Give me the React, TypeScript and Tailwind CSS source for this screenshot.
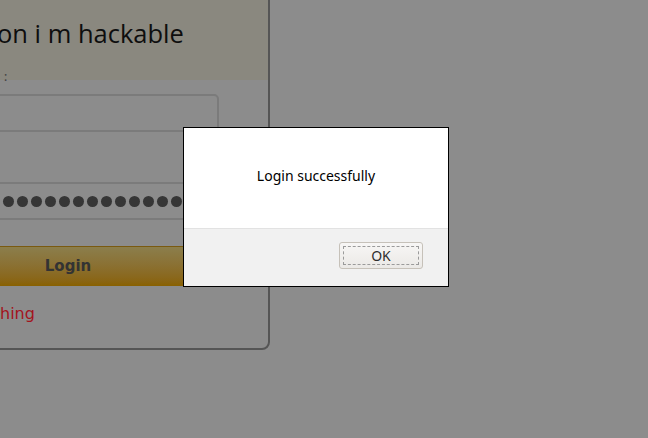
export default function App() {
  const dots = Array.from({ length: 20 });
  return (
    <div className="relative h-[438px] w-[648px] overflow-hidden bg-[#8c8c8c] font-['Lato',sans-serif]">
      {/* login card behind the overlay */}
      <div className="-ml-[134px] -mt-[20px] flex h-[370px] w-[404px] flex-col rounded-b-lg border-2 border-[#555555]">
        <div className="h-[98px] bg-[#8a887f] pl-[129px] pt-[36px]">
          <div className="font-['Open_Sans',sans-serif] text-[25.5px] font-medium leading-[30px] text-[#0e0e0e]">on i m hackable</div>
        </div>
        <div className="flex flex-col px-[49px]">
          <div className="-mt-[13px] h-[20px] pl-[87px] text-[13px] text-[#444]">:</div>
          <div className="mt-[7px] h-[38px] rounded-[5px] border-2 border-[#7b7b7b]" />
          <div className="h-[50px]" />
          <div className="flex h-[38px] items-center gap-[3px] overflow-hidden rounded-[5px] border-2 border-[#7b7b7b] pl-[70px]">
            {dots.map((_, i) => (
              <div key={i} className="h-[11px] w-[11px] shrink-0 rounded-full bg-[#363636]" />
            ))}
          </div>
          <div className="mt-[26px] flex h-[40px] items-center justify-center border-t border-[#7a5a10] bg-gradient-to-b from-[#8b7e4c] to-[#896100]">
            <span className="font-['DejaVu_Sans',sans-serif] text-[15px] font-bold text-[#333]">Login</span>
          </div>
          <div className="mt-[17px] pl-[83px] font-['DejaVu_Sans',sans-serif] text-[16px] leading-[22px] text-[#a3131c]">
            hing
          </div>
        </div>
      </div>

      {/* alert dialog */}
      <div className="absolute left-[183px] top-[127px] flex h-[160px] w-[266px] flex-col border border-black bg-white font-['Noto_Sans',sans-serif]">
        <div className="flex h-[100px] items-center justify-center pb-[6px] text-[14px] text-black">
          Login successfully
        </div>
        <div className="flex flex-1 items-start justify-end border-t border-[#e2e2e2] bg-[#f1f1f1] pr-[25px] pt-[13px]">
          <div className="flex h-[27px] w-[84px] items-center justify-center rounded-[3px] border border-[#c6c1b9] bg-gradient-to-b from-[#f7f6f5] to-[#ebe9e6] p-[3px]">
            <div className="flex h-full w-full items-center justify-center border border-dashed border-[#9a9a9a] text-[14px] text-[#2e2e2e]">
              OK
            </div>
          </div>
        </div>
      </div>
    </div>
  );
}
